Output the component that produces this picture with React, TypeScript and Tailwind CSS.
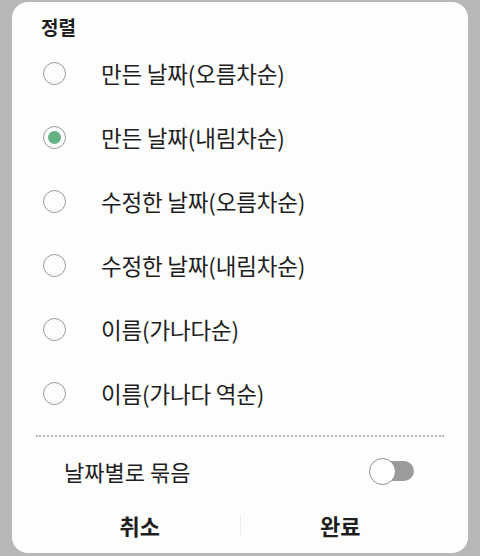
import React from "react";

const items = [
  "만든 날짜(오름차순)",
  "만든 날짜(내림차순)",
  "수정한 날짜(오름차순)",
  "수정한 날짜(내림차순)",
  "이름(가나다순)",
  "이름(가나다 역순)",
];

export default function App() {
  const selected = 1;
  return (
    <div
      className="w-[480px] h-[556px] bg-[#b8b8b8] pt-[2px] pl-[12px] pr-[12px] pb-[3px] flex"
      style={{ fontFamily: '"Noto Sans CJK KR", "Noto Sans", sans-serif' }}
    >
      <div className="flex-1 bg-[#fdfdfd] rounded-[16px] flex flex-col text-[#1e1e1e]">
        <div className="pl-[29px] pt-[12px] h-[39px] text-[19px] font-bold leading-[26px]">정렬</div>
        <div className="flex flex-col">
          {items.map((t, i) => (
            <div key={i} className="h-[64px] flex items-center pl-[31px]">
              <div className="w-[23px] h-[23px] rounded-full border-[1.5px] border-[#9a9a9a] flex items-center justify-center">
                {i === selected && <div className="w-[13px] h-[13px] rounded-full bg-[#63b185]" />}
              </div>
              <div className="ml-[35px] text-[22.5px] leading-[30px] tracking-[-0.2px]">{t}</div>
            </div>
          ))}
        </div>
        <div className="mx-[24px] mt-[10px] border-t-2 border-dotted border-[#b9b9b9]" />
        <div className="h-[70px] flex items-center pl-[52px] pr-[54px] justify-between -mt-[1px]">
          <div className="text-[22px] leading-[28px]">날짜별로 묶음</div>
          <div className="relative w-[45px] h-[27px] flex items-center">
            <div className="absolute right-0 w-[36px] h-[20px] rounded-full bg-[#9b9b9b]" />
            <div className="absolute left-0 w-[27px] h-[27px] rounded-full bg-white border-[1.5px] border-[#8e8e8e]" />
          </div>
        </div>
        <div className="flex items-center h-[38px] px-[28px]">
          <div className="flex-1 text-center text-[22px] font-bold">취소</div>
          <div className="w-[1px] h-[20px] bg-[#ececec]" />
          <div className="flex-1 text-center text-[22px] font-bold">완료</div>
        </div>
      </div>
    </div>
  );
}
